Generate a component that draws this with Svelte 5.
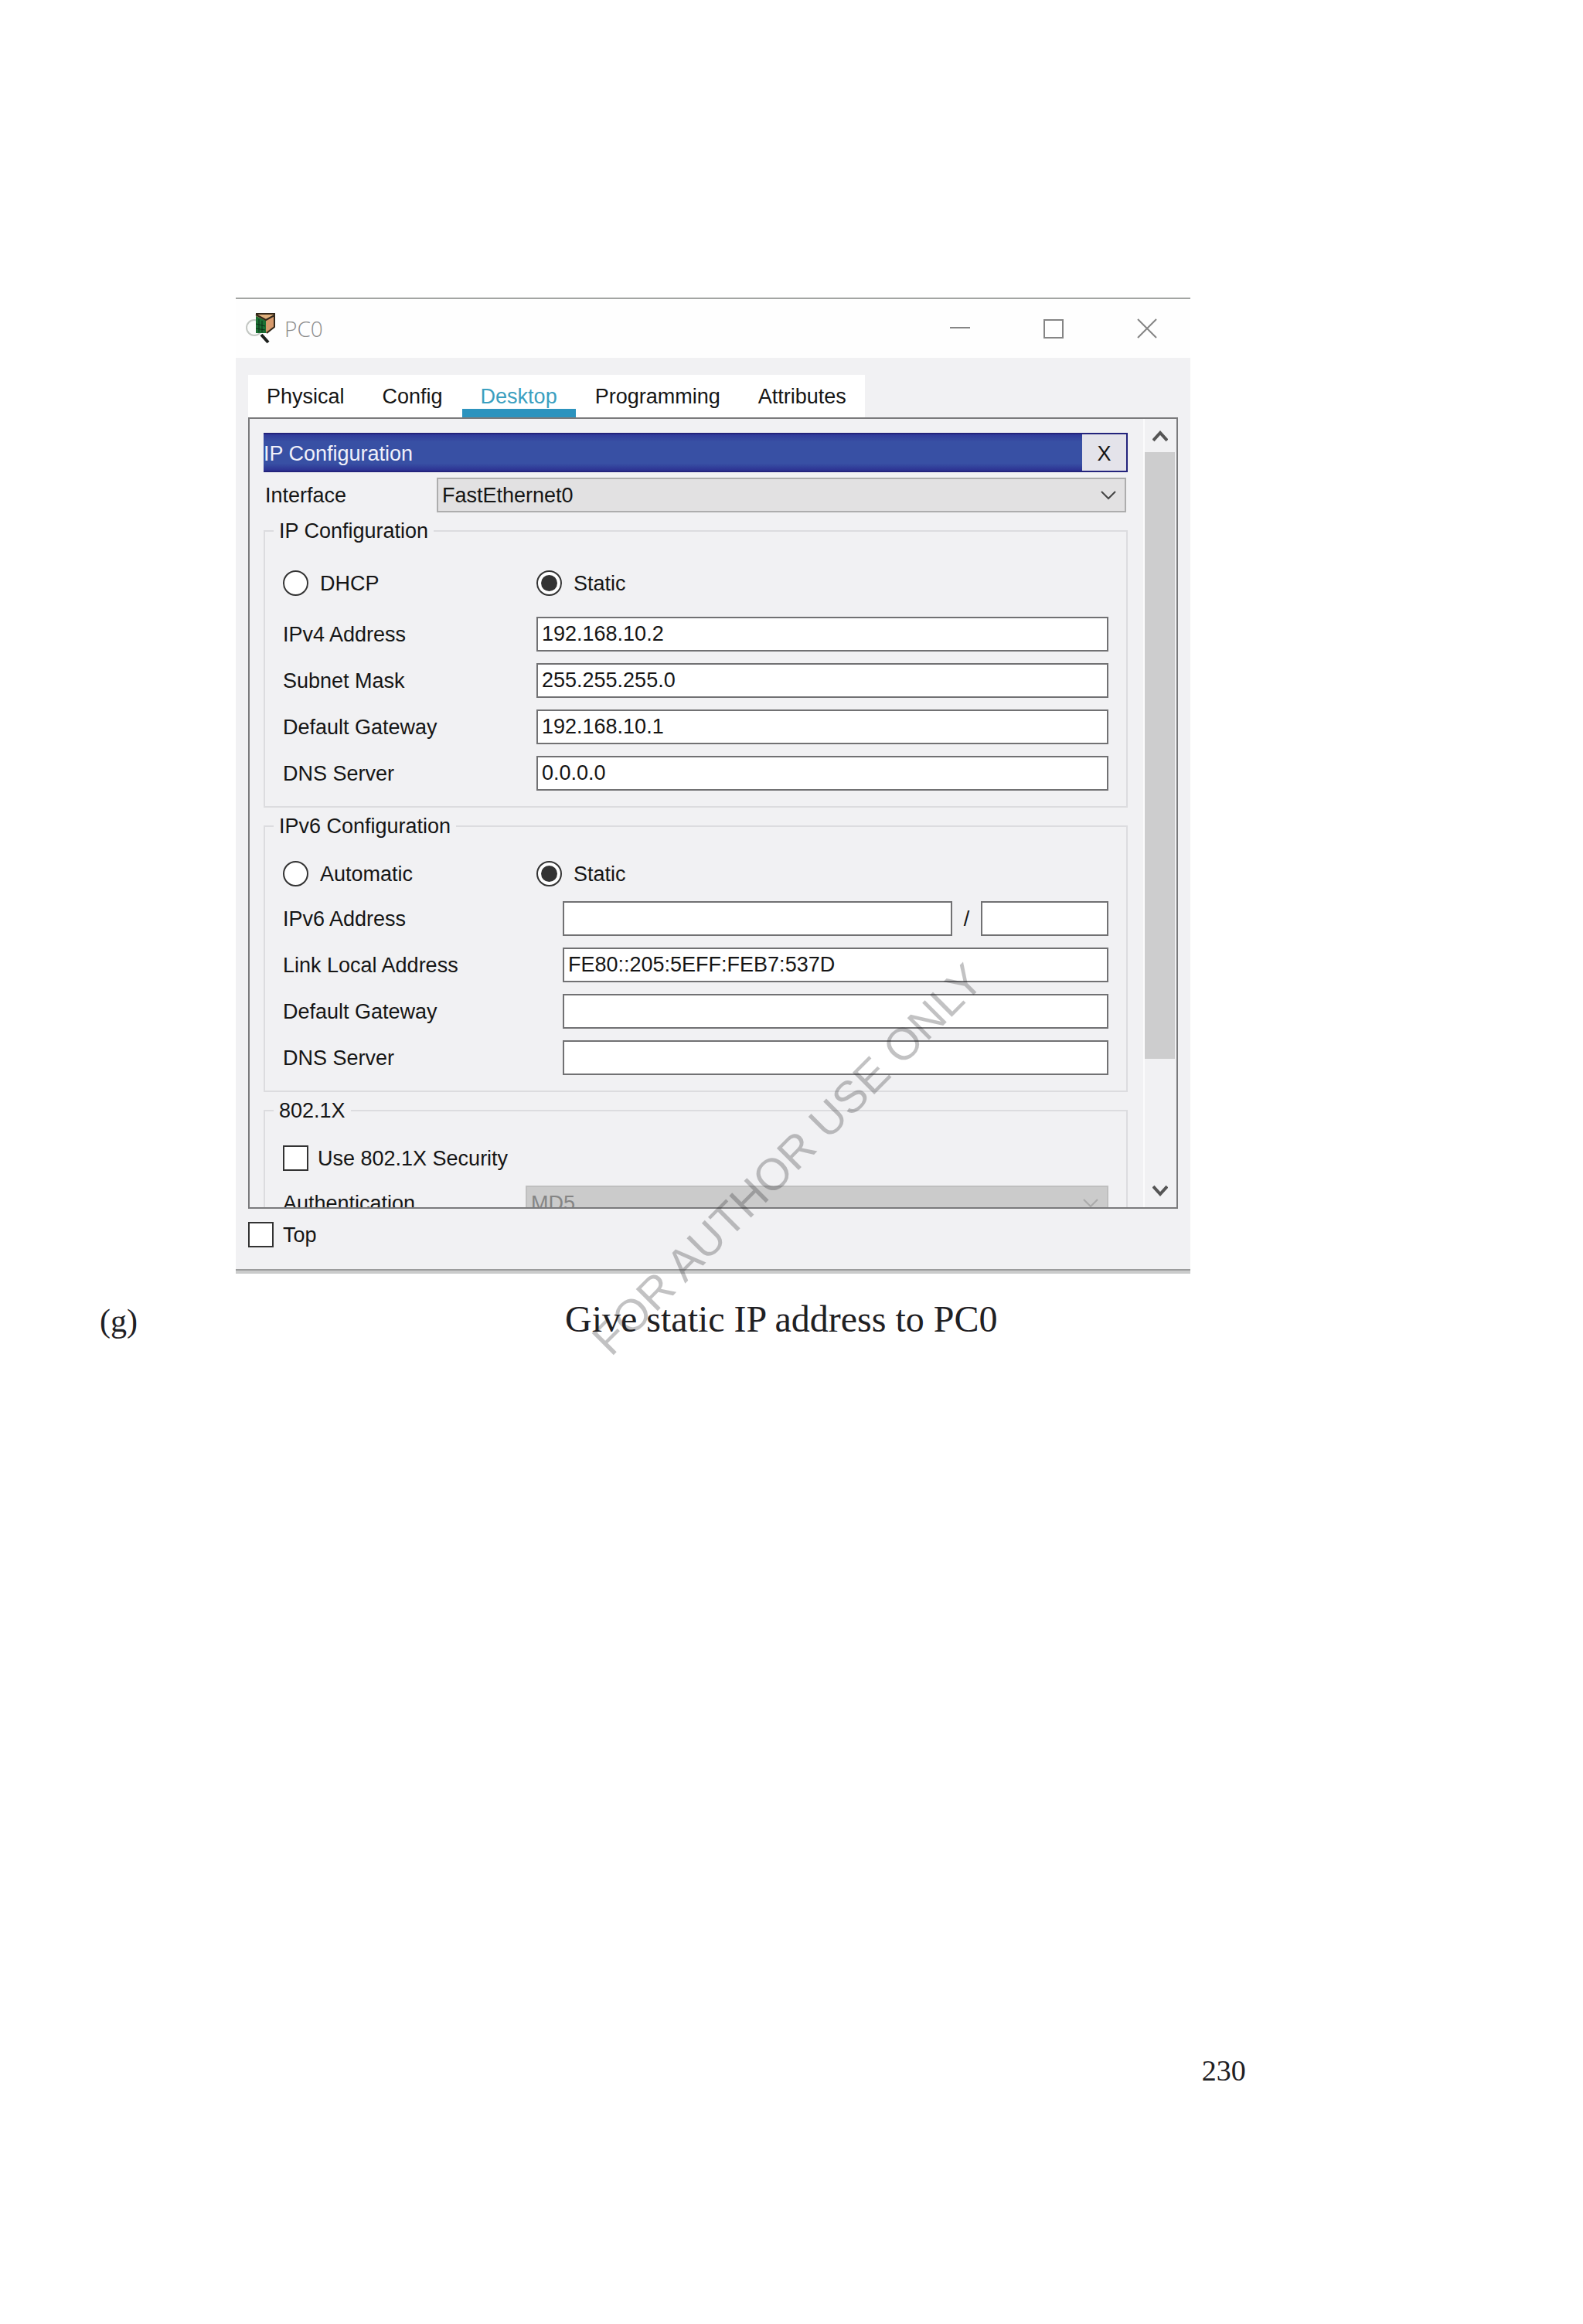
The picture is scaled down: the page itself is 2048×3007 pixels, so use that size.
<script lang="ts">
    const tabs = ['Physical', 'Config', 'Desktop', 'Programming', 'Attributes'];
    let activeTab = $state('Desktop');

    let ipv4Mode = $state('static');
    let ipv6Mode = $state('static');

    let ipv4 = $state([
        { id: 'ipv4-address', label: 'IPv4 Address', value: '192.168.10.2' },
        { id: 'subnet-mask', label: 'Subnet Mask', value: '255.255.255.0' },
        { id: 'ipv4-gateway', label: 'Default Gateway', value: '192.168.10.1' },
        { id: 'ipv4-dns', label: 'DNS Server', value: '0.0.0.0' },
    ]);

    let ipv6 = $state([
        { id: 'link-local', label: 'Link Local Address', value: 'FE80::205:5EFF:FEB7:537D' },
        { id: 'ipv6-gateway', label: 'Default Gateway', value: '' },
        { id: 'ipv6-dns', label: 'DNS Server', value: '' },
    ]);
</script>

<main class="page">
    <div class="figure">
        <section class="window">
            <header class="titlebar">
                <svg class="app-icon" viewBox="0 0 42 42" aria-hidden="true">
                    <circle cx="12" cy="20" r="10" fill="#fbfcfb" stroke="#c4c8c4" stroke-width="2" />
                    <path d="M14 2 H38 V19 L28 27 H14 Z" fill="#b98a5c" />
                    <path d="M15 3 L38 3 L27 10 Z" fill="#dfb07c" />
                    <path d="M27 10 L38 4 V19 L27 25 Z" fill="#d79a6c" />
                    <path d="M14 5 L27 11 V27 H14 Z" fill="#1c7034" />
                    <path d="M18 9 V26 M22 11 V26 M14 15 L26 18 M14 21 L26 23" stroke="#0b2f16" stroke-width="1" fill="none" />
                    <path d="M14 2 H38 V19 L28 27 M14 3 L27 10 L38 4" stroke="#33281a" stroke-width="2" fill="none" />
                    <path d="M21 29 L30 39" stroke="#1c1f1c" stroke-width="4" />
                </svg>
                <h1 class="title">PC0</h1>
                <button class="win-btn" aria-label="Minimize">
                    <svg viewBox="0 0 26 26"><path d="M0 12 H26" /></svg>
                </button>
                <button class="win-btn" aria-label="Maximize">
                    <svg viewBox="0 0 26 26"><path d="M1 2 H25 V25 H1 Z" /></svg>
                </button>
                <button class="win-btn" aria-label="Close">
                    <svg viewBox="0 0 26 26"><path d="M1 1 L25 25 M25 1 L1 25" /></svg>
                </button>
            </header>

            <div class="body">
                <div class="tabs" role="tablist">
                    {#each tabs as tab}
                        <button
                            class="tab"
                            class:active={tab === activeTab}
                            role="tab"
                            aria-selected={tab === activeTab}
                            onclick={() => (activeTab = tab)}>{tab}</button>
                    {/each}
                </div>

                <div class="pane">
                    <div class="content">
                        <div class="panel-head">
                            <h2>IP Configuration</h2>
                            <button class="panel-close">X</button>
                        </div>

                        <div class="interface">
                            <label for="interface">Interface</label>
                            <div class="select">
                                <select id="interface">
                                    <option>FastEthernet0</option>
                                </select>
                                <svg viewBox="0 0 20 12" aria-hidden="true"><path d="M1 1 L10 10 L19 1" /></svg>
                            </div>
                        </div>

                        <fieldset class="ipv4">
                            <legend>IP Configuration</legend>
                            <div class="modes">
                                <label class="choice"><input type="radio" name="ipv4" value="dhcp" bind:group={ipv4Mode} />DHCP</label>
                                <label class="choice"><input type="radio" name="ipv4" value="static" bind:group={ipv4Mode} />Static</label>
                            </div>
                            {#each ipv4 as field}
                                <div class="row">
                                    <label for={field.id}>{field.label}</label>
                                    <input id={field.id} type="text" bind:value={field.value} />
                                </div>
                            {/each}
                        </fieldset>

                        <fieldset class="ipv6">
                            <legend>IPv6 Configuration</legend>
                            <div class="modes">
                                <label class="choice"><input type="radio" name="ipv6" value="auto" bind:group={ipv6Mode} />Automatic</label>
                                <label class="choice"><input type="radio" name="ipv6" value="static" bind:group={ipv6Mode} />Static</label>
                            </div>
                            <div class="row">
                                <label for="ipv6-address">IPv6 Address</label>
                                <div class="prefixed">
                                    <input id="ipv6-address" type="text" />
                                    <span>/</span>
                                    <input type="text" aria-label="Prefix length" />
                                </div>
                            </div>
                            {#each ipv6 as field}
                                <div class="row">
                                    <label for={field.id}>{field.label}</label>
                                    <input id={field.id} type="text" bind:value={field.value} />
                                </div>
                            {/each}
                        </fieldset>

                        <fieldset class="dot1x">
                            <legend>802.1X</legend>
                            <div class="modes">
                                <label class="choice"><input type="checkbox" />Use 802.1X Security</label>
                            </div>
                            <div class="row">
                                <label for="auth">Authentication</label>
                                <div class="select">
                                    <select id="auth" disabled>
                                        <option>MD5</option>
                                    </select>
                                    <svg viewBox="0 0 20 12" aria-hidden="true"><path d="M1 1 L10 10 L19 1" /></svg>
                                </div>
                            </div>
                        </fieldset>
                    </div>

                    <div class="scrollbar">
                        <button aria-label="Scroll up">
                            <svg viewBox="0 0 20 16"><path d="M1 14 L10 4 L19 14" /></svg>
                        </button>
                        <div class="thumb"></div>
                        <div class="track"></div>
                        <button aria-label="Scroll down">
                            <svg viewBox="0 0 20 16"><path d="M1 2 L10 12 L19 2" /></svg>
                        </button>
                    </div>
                </div>

                <label class="choice top"><input type="checkbox" />Top</label>
            </div>
        </section>
    </div>

    <div class="caption">
        <span class="marker">(g)</span>
        <p>Give static IP address to PC0</p>
    </div>

    <footer>230</footer>

    <div class="watermark">FOR AUTHOR USE ONLY</div>
</main>

<style>
    :global(body) {
        background: #ffffff;
    }

    .page {
        position: relative;
        box-sizing: border-box;
        display: flex;
        flex-direction: column;
        min-height: 100vh;
        padding: 385px 0 306px;
        overflow: hidden;
        color: #1f2023;
        font-family: "Liberation Serif", "Times New Roman", serif;
    }

    .figure {
        display: grid;
        grid-template-columns: 305fr 1235fr 508fr;
    }

    .window {
        grid-column: 2;
        min-width: 0;
        border-top: 2px solid #a3a5a3;
        border-bottom: 4px solid #cacbcb;
        color: #151515;
        font: 27px/30px "Liberation Sans", Arial, sans-serif;
    }

    button,
    input,
    select {
        box-sizing: border-box;
        margin: 0;
        padding: 0;
        border: none;
        border-radius: 0;
        font: inherit;
        color: inherit;
    }

    svg {
        display: block;
        fill: none;
        stroke: currentColor;
    }

    /* title bar */
    .titlebar {
        display: flex;
        align-items: center;
        height: 76px;
        padding: 0 19px 0 12px;
        background: #fefefe;
    }

    .app-icon {
        width: 42px;
        height: 42px;
        stroke: none;
    }

    .title {
        flex: 1;
        margin: 0 0 0 9px;
        color: #8c8c8c;
        font: 300 28px/38px "Open Sans", "Noto Sans", sans-serif;
    }

    .win-btn {
        display: grid;
        place-items: center;
        width: 74px;
        height: 48px;
        margin-left: 47px;
        background: none;
        color: #858585;
    }

    .win-btn svg {
        width: 26px;
        height: 26px;
        stroke-width: 2;
    }

    .body {
        padding: 22px 16px 28px;
        background: #f1f1f3;
        border-bottom: 2px solid #9b9c9c;
    }

    /* tabs */
    .tabs {
        display: flex;
        gap: 1px;
        width: max-content;
        background: #ffffff;
    }

    .tab {
        height: 55px;
        padding: 12px 24px 0;
        background: none;
        border-bottom: 11px solid transparent;
    }

    .tab.active {
        color: #3b9fc0;
        border-bottom-color: #2c93be;
    }

    /* scrolling pane */
    .pane {
        box-sizing: border-box;
        display: flex;
        height: 1024px;
        border: 2px solid #7a7a7c;
        overflow: hidden;
    }

    .content {
        flex: 1;
        min-width: 0;
        padding: 18px 20px 0 18px;
    }

    .panel-head {
        box-sizing: border-box;
        display: flex;
        align-items: center;
        height: 51px;
        border: 2px solid #23237c;
        border-left: none;
        background: linear-gradient(#30399a, #3850a4 20%, #3850a4 80%, #2c3192);
    }

    .panel-head h2 {
        flex: 1;
        margin: 0;
        padding-top: 3px;
        color: #f0f0fa;
        font: inherit;
    }

    .panel-close {
        align-self: stretch;
        width: 57px;
        padding-top: 2px;
        background: #e4e3ea;
    }

    .interface {
        display: grid;
        grid-template-columns: 224px 1fr;
        align-items: center;
        margin: 7px 2px 9px 0;
    }

    .interface > label {
        padding-left: 2px;
    }

    .select {
        position: relative;
        min-width: 0;
    }

    select {
        display: block;
        width: 100%;
        height: 45px;
        padding: 0 5px;
        appearance: none;
        border: 2px solid #adadad;
        background: #e2e1e2;
    }

    select:disabled {
        border-color: #bfbfbf;
        background: #cbcbcb;
        color: #858585;
        opacity: 1;
    }

    .select svg {
        position: absolute;
        top: 17px;
        right: 13px;
        width: 20px;
        height: 12px;
        color: #444444;
        stroke-width: 2;
        pointer-events: none;
    }

    select:disabled + svg {
        color: #aaaaaa;
    }

    /* groups */
    fieldset {
        display: block;
        min-width: 0;
        margin: 0 0 9px;
        padding: 30px 23px 20px;
        border: 2px solid #dcdcdf;
    }

    legend {
        margin-left: -12px;
        padding: 0 7px;
    }

    .modes {
        display: grid;
        grid-template-columns: 328px 1fr;
        margin-bottom: 19px;
    }

    .row {
        display: grid;
        grid-template-columns: 362px 1fr;
        align-items: center;
        height: 45px;
        margin-bottom: 15px;
    }

    .row:last-child {
        margin-bottom: 0;
    }

    .ipv4 {
        padding-top: 36px;
    }

    .ipv4 .modes {
        margin-bottom: 27px;
    }

    .ipv4 .row {
        grid-template-columns: 328px 1fr;
    }

    .dot1x .modes {
        grid-template-columns: 1fr;
    }

    .dot1x .row {
        grid-template-columns: 314px 1fr;
    }

    input[type="text"] {
        width: 100%;
        min-width: 0;
        height: 45px;
        padding: 0 5px;
        border: 2px solid #717173;
        background: #ffffff;
    }

    .prefixed {
        display: grid;
        grid-template-columns: 504fr 37px 165fr;
        align-items: center;
    }

    .prefixed span {
        text-align: center;
    }

    .choice {
        display: flex;
        align-items: center;
        gap: 12px;
    }

    .choice:has(input[type="radio"]) {
        gap: 15px;
    }

    input[type="radio"],
    input[type="checkbox"] {
        flex: none;
        display: grid;
        place-items: center;
        width: 33px;
        height: 33px;
        appearance: none;
        border: 2px solid #333333;
        background: #ffffff;
    }

    input[type="radio"] {
        border-radius: 50%;
    }

    input[type="radio"]:checked::before {
        content: "";
        width: 21px;
        height: 21px;
        border-radius: 50%;
        background: #333333;
    }

    input[type="checkbox"]:checked::before {
        content: "";
        width: 17px;
        height: 17px;
        background: #333333;
    }

    .top {
        width: max-content;
        margin-top: 17px;
    }

    /* scrollbar */
    .scrollbar {
        display: flex;
        flex-direction: column;
        width: 39px;
        margin-right: 2px;
        border-left: 2px solid #fbfbfc;
    }

    .scrollbar button {
        display: grid;
        place-items: center;
        height: 43px;
        background: #f1f1f3;
        color: #555555;
    }

    .scrollbar svg {
        width: 20px;
        height: 16px;
        stroke-width: 4;
    }

    .thumb {
        flex: 786;
        background: #cdcdce;
    }

    .track {
        flex: 149;
    }

    /* book page */
    .caption {
        display: grid;
        grid-template-columns: 602fr 1317fr;
        align-items: baseline;
        margin-top: 31px;
        padding-left: 6.3%;
    }

    .caption p {
        margin: 0;
        font-size: 48px;
        line-height: 56px;
    }

    .marker {
        font-size: 42px;
        line-height: 56px;
    }

    footer {
        margin-top: auto;
        padding-right: 21.3%;
        font-size: 38px;
        line-height: 44px;
        text-align: right;
    }

    .watermark {
        position: absolute;
        top: 1701px;
        left: 39%;
        color: rgba(30, 30, 35, 0.27);
        font: 58px/64px "Liberation Sans", Arial, sans-serif;
        white-space: nowrap;
        transform: rotate(-45deg);
        transform-origin: left bottom;
        pointer-events: none;
    }
</style>
